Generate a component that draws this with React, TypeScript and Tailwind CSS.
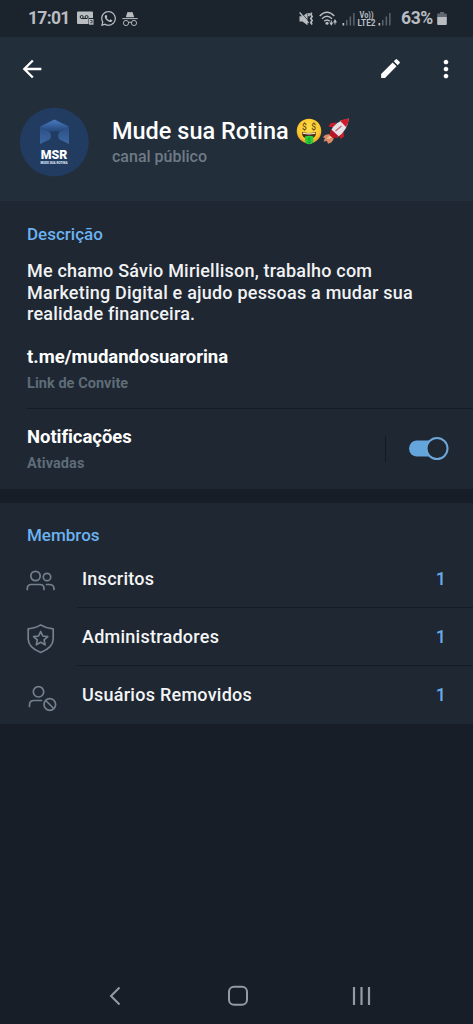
import type { ReactNode } from 'react'
import { MdArrowBack, MdEdit, MdMoreVert } from 'react-icons/md'
import { FaWhatsapp } from 'react-icons/fa'

interface MemberRow {
  label: string
  count: number
  icon: ReactNode
}

function VoicemailIcon() {
  return (
    <svg className="h-[15px] w-[17px]" viewBox="0 0 17 15">
      <path d="M1 .5h14a1 1 0 0 1 1 1V7h-4.500v6H1a1 1 0 0 1-1-1V1.500a1 1 0 0 1 1-1z" fill="#b9bdc2" />
      <g fill="none" stroke="#1b242d" strokeWidth="1">
        <circle cx="4.700" cy="6" r="1.500" />
        <circle cx="9.600" cy="6" r="1.500" />
        <path d="M4.700 7.500h5" />
      </g>
      <path d="M12 8h4.500v5.700H12z" fill="#b9bdc2" />
      <path d="M13.200 9.500h2M13.200 11.800h2M15 9.500v2.500" stroke="#1b242d" strokeWidth=".7" />
    </svg>
  )
}

function IncognitoIcon() {
  return (
    <svg className="h-4 w-4" viewBox="0 0 16 16" fill="none">
      <path d="M3.800 6.300 5.300 1.400Q5.500.7 6.300 1q1.700.6 3.400 0 .8-.3 1 .4l1.500 4.900z" fill="#b9bdc2" />
      <path d="M.3 7.600h15.400" stroke="#b9bdc2" strokeWidth="1" />
      <circle cx="4" cy="12" r="2.600" stroke="#b9bdc2" strokeWidth=".9" />
      <circle cx="12" cy="12" r="2.600" stroke="#b9bdc2" strokeWidth=".9" />
      <path d="M6.700 11.500q1.300-.8 2.600 0" stroke="#b9bdc2" />
    </svg>
  )
}

function MuteVibrateIcon() {
  return (
    <svg className="h-4 w-[15px]" viewBox="0 0 15 16" fill="none">
      <path d="M.5 5.300h3L8.500 1.800v12.500l-5-3.800h-3z" fill="#b9bdc2" />
      <path d="M2 1.200 9.500 10" stroke="#1b242d" strokeWidth=".8" />
      <path d="M.7 1.500 9.500 12" stroke="#b9bdc2" strokeWidth="1.300" />
      <path d="M10 2v2.200l-.6 1M12.800 1.800l-1 1.600 1.300 2-1.300 2 1.300 2.100-1.300 2 1.300 2" stroke="#b9bdc2" strokeWidth="1.700" />
    </svg>
  )
}

function WifiIcon() {
  return (
    <svg className="h-4 w-[19px]" viewBox="0 0 19 16" fill="none">
      <g stroke="#b9bdc2" strokeWidth="1.400">
        <path d="M.7 5Q8 -2.300 15.300 5" />
        <path d="M3 7.700q5-5 10 0" />
        <path d="M5.200 10.300q2.800-2.700 5.600 0" />
      </g>
      <circle cx="8" cy="12.200" r="1.500" fill="#b9bdc2" />
      <path d="M10.300 11.500h4l-2 3.300zM14 11.500h4l-2-3.500z" fill="#b9bdc2" />
      <path d="M12.300 9.500v3M16 10.500v3" stroke="#b9bdc2" strokeWidth="1" />
    </svg>
  )
}

function SignalIcon() {
  return (
    <svg className="h-[14px] w-[14px]" viewBox="0 0 14 14">
      <path d="M.5 11h1.700v2.500H.5z" fill="#b9bdc2" />
      <path d="M4 8h1.500v5.500H4zM7.600 4.500h1.500v9H7.600zM11.100 1h1.500v12.500h-1.500z" fill="#5b636b" />
    </svg>
  )
}

function BatteryIcon() {
  return (
    <svg className="h-[15px] w-[10px]" viewBox="0 0 10 15">
      <path d="M3 1h4v1.500h2q.8 0 .8.800V6H.2V3.300q0-.8.8-.8h2z" fill="#62686f" />
      <path d="M.2 6h9.600v7q0 1-1 1H1.200q-1 0-1-1z" fill="#b9bdc2" />
    </svg>
  )
}

function StatusBar() {
  return (
    <div className="flex h-[37px] items-center bg-[#1b242d] pl-7 text-[#b9bdc2]">
      <span className="w-[42px] text-[17.500px] font-bold leading-none tracking-[-0.700px]">17:01</span>
      <div className="ml-[7px] flex items-center">
        <VoicemailIcon />
        <FaWhatsapp className="ml-1.5 h-[17px] w-[17px]" />
        <span className="ml-[5px]"><IncognitoIcon /></span>
      </div>
      <div className="ml-auto flex items-center pr-[26px]">
        <span className="mr-px"><MuteVibrateIcon /></span>
        <span className="ml-1"><WifiIcon /></span>
        <span className="ml-1"><SignalIcon /></span>
        <svg className="ml-px h-4 w-[19px]" viewBox="0 0 19 16" fill="#b9bdc2" fontSize="8.500" fontWeight="700">
          <text x="2.500" y="7" textLength="14" lengthAdjust="spacingAndGlyphs">Vo))</text>
          <text x="0.500" y="15" textLength="18" lengthAdjust="spacingAndGlyphs">LTE2</text>
        </svg>
        <span className="ml-[2px]"><SignalIcon /></span>
        <span className="ml-[9px] w-[32px] whitespace-nowrap text-[17.500px] font-bold leading-none tracking-[-0.400px]">63%</span>
        <span className="ml-1"><BatteryIcon /></span>
      </div>
    </div>
  )
}

function Avatar() {
  return (
    <svg className="h-[70px] w-[70px]" viewBox="0 0 70 70">
      <defs>
        <linearGradient id="flap" x1="0" y1="0" x2="0" y2="1">
          <stop offset="0" stopColor="#487cc4" />
          <stop offset="1" stopColor="#244474" />
        </linearGradient>
        <linearGradient id="side" x1="0" y1="0" x2="0" y2="1">
          <stop offset="0" stopColor="#2a4e83" />
          <stop offset="1" stopColor="#3c68a3" />
        </linearGradient>
      </defs>
      <circle cx="35.300" cy="35" r="34.500" fill="#213b61" />
      <path d="M21 19.500V37l9.500-4.500q3-4-.5-8zM50 19.500V37l-9.500-4.500q-3-4 .5-8z" fill="url(#side)" />
      <path d="M35.500 12.500 50 19.500l-10 5.500q-4.500-1.500-9 0l-10-5.500z" fill="url(#flap)" />
      <text x="35" y="52.300" textAnchor="middle" textLength="26.500" lengthAdjust="spacingAndGlyphs" fontSize="12.500" fontWeight="900" fill="#fff">MSR</text>
      <text x="35" y="57" textAnchor="middle" textLength="27" lengthAdjust="spacingAndGlyphs" fontSize="3.600" fontWeight="900" fill="#dbe4f0">MUDE SUA ROTINA</text>
    </svg>
  )
}

function MoneyFaceEmoji() {
  return (
    <svg className="h-7 w-[26px]" viewBox="0 0 26 28">
      <defs>
        <radialGradient id="face" cx=".5" cy=".4" r=".6">
          <stop offset="0" stopColor="#ffe04a" />
          <stop offset=".7" stopColor="#fcc930" />
          <stop offset="1" stopColor="#ee9d26" />
        </radialGradient>
      </defs>
      <circle cx="13" cy="14" r="12.300" fill="url(#face)" />
      <text x="8.500" y="12.500" textAnchor="middle" fontSize="8.500" fontWeight="500" fill="#6c4a1c">$</text>
      <text x="17.700" y="12.500" textAnchor="middle" fontSize="8.500" fontWeight="500" fill="#6c4a1c">$</text>
      <path d="M6 15q7 2.200 14 0 .6 6.400-7 6.700-7.600-.3-7-6.700z" fill="#4b2a12" />
      <path d="M6.700 15.400q6.300 1.800 12.600 0v1.400q-6.300 1.500-12.600 0z" fill="#fff3d8" />
      <path d="M9 19.500q4-1.500 8.300 0v4q0 3.700-4.100 3.700T9 23.500z" fill="#28d03c" />
      <text x="13.200" y="26" textAnchor="middle" fontSize="6.500" fontWeight="400" fill="#128a2a">$</text>
    </svg>
  )
}

function RocketEmoji() {
  return (
    <svg className="h-7 w-7" viewBox="0 0 28 28">
      <path d="M9.500 17.500Q3 16.500 1 20.500l2 .4L1.500 24.500l3.500-.4 1 2.600q5-.7 6-6.700z" fill="#d98a66" />
      <path d="M9.500 18.500q-3 .3-5 3.500 4 0 6-2z" fill="#f6c09b" />
      <path d="M14.500 5.500 8.500 6.200 6.500 9.500l5 1zM21.500 14l.5 5.500-3.500 2.500-2-4.500z" fill="#c91e2a" />
      <path d="M8.500 14.500Q12.500 4 26.800 1.400q-1 12-11.800 19.100z" fill="#e6e1e6" />
      <path d="M18 3.700Q22.500 1.700 26.800 1.400q-.2 4.500-2.800 8.600z" fill="#cf1c2b" />
      <path d="M9.300 12.500Q7.300 15.500 7.500 18l3.200 3q3 .5 6-1.800z" fill="#b81525" />
      <path d="m13.500 14 6-5" stroke="#bf6873" strokeWidth="1.300" />
    </svg>
  )
}

function Header() {
  return (
    <header className="h-[164px] bg-[#222e3a]">
      <div className="flex h-[63px] items-center pl-[18px] pr-[13px] text-white">
        <MdArrowBack className="h-7 w-7" />
        <MdEdit className="ml-auto h-[25px] w-[25px]" />
        <MdMoreVert className="ml-[29px] h-7 w-7" />
      </div>
      <div className="flex items-start pl-[19px]">
        <div className="mt-[7px] shrink-0"><Avatar /></div>
        <div className="ml-[23px] pt-[17px]">
          <div className="flex h-7 items-center">
            <h1 className="w-[184px] whitespace-nowrap text-[23.500px] font-medium leading-7 text-white">Mude sua Rotina</h1>
            <MoneyFaceEmoji />
            <RocketEmoji />
          </div>
          <p className="mt-0.5 text-[16px] font-medium leading-5 text-[#6f7b87]">canal público</p>
        </div>
      </div>
    </header>
  )
}

function Info() {
  return (
    <section className="h-[288px] bg-[#1e2732] pl-[27px] pt-[23px] text-white">
      <h2 className="text-[17px] font-medium leading-5 text-[#6cb2f0]">Descrição</h2>
      <p className="mt-4 whitespace-nowrap text-[18px] font-medium leading-[21.500px] tracking-[0.210px] text-[#f1f2f4]">
        Me chamo Sávio Miriellison, trabalho com
        <br />
        Marketing Digital e ajudo pessoas a mudar sua
        <br />
        realidade financeira.
      </p>
      <p className="mt-[22px] text-[18.500px] font-bold leading-5">t.me/mudandosuarorina</p>
      <p className="mt-[7px] text-[14.500px] font-bold leading-5 tracking-[0.050px] text-[#5f6c78]">Link de Convite</p>
      <div className="mt-3.5 h-px bg-[#151c25]" />
      <div className="flex items-start">
        <div className="pt-[18px]">
          <p className="text-[18.500px] font-bold leading-5 tracking-[-0.050px]">Notificações</p>
          <p className="mt-[7px] text-[14.500px] font-bold leading-5 tracking-[0.100px] text-[#5f6c78]">Ativadas</p>
        </div>
        <div className="ml-auto mt-[27px] h-[26px] w-px bg-[#121921]" />
        <svg className="ml-[22px] mr-6 mt-[27px] h-6 w-[41px]" viewBox="0 0 41 24">
          <rect x="1" y="4.500" width="36" height="16" rx="8" fill="#64a5dc" />
          <circle cx="29" cy="12.500" r="10.500" fill="#1e2732" stroke="#6da6d8" strokeWidth="2" />
        </svg>
      </div>
    </section>
  )
}

const memberRows: MemberRow[] = [
  {
    label: 'Inscritos',
    count: 1,
    icon: (
      <>
        <circle cx="9.500" cy="10" r="4.700" />
        <circle cx="21" cy="11" r="3.700" />
        <path d="M1.300 23.500v-1q0-4 4-4H14q4 0 4 4v1M20.500 18.500H23q5 0 5 4v1" />
      </>
    ),
  },
  {
    label: 'Administradores',
    count: 1,
    icon: (
      <>
        <path d="M14.700.900Q9.500 4.300 2.200 4.800V15q0 8.500 12.500 13.500 12.500-5 12.500-13.500V4.800Q20 4.300 14.700.900z" />
        <path d="m14.700 7.500 2.100 4.500 5 .6-3.700 3.300 1 4.900-4.400-2.500-4.400 2.500 1-4.900-3.700-3.300 5-.6z" />
      </>
    ),
  },
  {
    label: 'Usuários Removidos',
    count: 1,
    icon: (
      <>
        <circle cx="12.500" cy="9.800" r="5.200" />
        <path d="M3.500 24.500v-1.500q0-4.500 4.500-4.500h7.500" />
        <circle cx="23.800" cy="22.500" r="5.800" />
        <path d="m19.700 18.500 8 8" />
      </>
    ),
  },
]

function Members() {
  return (
    <section className="mt-[14px] h-[221px] bg-[#1e2732] pt-[22px]">
      <h2 className="pl-[27px] text-[17px] font-medium leading-5 text-[#6cb2f0]">Membros</h2>
      <ul className="mt-[5px]">
        {memberRows.map((row, i) => (
          <li key={row.label} className="flex h-[58px] pl-[26px]">
            <svg
              className="mt-[16px] h-[31px] w-[31px] shrink-0"
              viewBox="0 0 31 31"
              fill="none"
              stroke="#74808b"
              strokeWidth="1.700"
              strokeLinecap="round"
              strokeLinejoin="round"
            >
              {row.icon}
            </svg>
            <div className={i < memberRows.length - 1 ? 'ml-5 flex flex-1 border-b border-[#151c25] pl-[5px]' : 'ml-5 flex flex-1 pl-[5px]'}>
              <span className="mt-[19px] text-[18px] font-medium leading-5 tracking-[0.250px] text-[#f4f5f6]">{row.label}</span>
              <span className="ml-auto mr-[27px] mt-[19px] text-[18px] font-medium leading-5 text-[#68abe6]">{row.count}</span>
            </div>
          </li>
        ))}
      </ul>
    </section>
  )
}

function NavBar() {
  return (
    <nav className="mt-auto flex h-[57px] items-center pl-[108px]">
      <svg className="h-[22px] w-[14px]" viewBox="0 0 14 22" fill="none" stroke="#959ba3" strokeWidth="2">
        <path d="M11.500 2.500 3 11l8.500 8.500" />
      </svg>
      <svg className="ml-[105px] h-[22px] w-[22px]" viewBox="0 0 22 22" fill="none" stroke="#959ba3" strokeWidth="2">
        <rect x="2" y="1.800" width="18" height="18" rx="5" />
      </svg>
      <svg className="ml-[102px] h-[22px] w-[22px]" viewBox="0 0 22 22" stroke="#959ba3" strokeWidth="2.200">
        <path d="M3 2v18M10.500 2v18M18 2v18" />
      </svg>
    </nav>
  )
}

export default function App() {
  return (
    <div className="flex h-[1024px] w-[473px] flex-col overflow-hidden bg-[#171e27] font-[Roboto,sans-serif]">
      <StatusBar />
      <Header />
      <Info />
      <Members />
      <NavBar />
    </div>
  )
}
